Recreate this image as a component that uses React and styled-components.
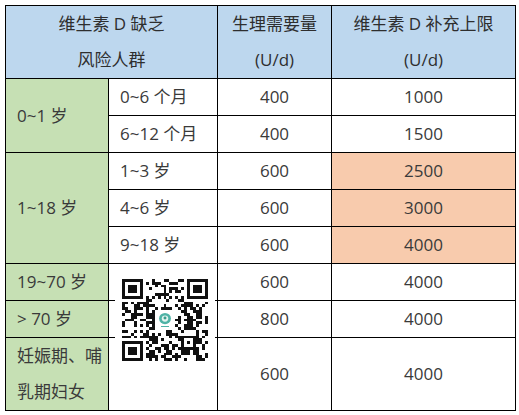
import React from "react";
import styled, { createGlobalStyle } from "styled-components";

const GlobalStyle = createGlobalStyle`
  html, body {
    margin: 0;
    background: #ffffff;
  }
`;

const Page = styled.div`
  padding: 5px;
`;

const Wrap = styled.div`
  position: relative;
  width: 510px;
`;

const Table = styled.table`
  border-collapse: collapse;
  table-layout: fixed;
  width: 510px;
  font-family: "Open Sans", "Noto Sans CJK SC", sans-serif;
  font-size: 17px;
  font-weight: 400;
  color: #3a3a3a;
`;

const Row = styled.tr`
  height: ${(p) => p.$h || 37}px;
`;

const Head = styled.th`
  border: 1px solid #000000;
  background: #bdd7ee;
  font-weight: 400;
  color: #2e2e2e;
  line-height: 36px;
  padding: 0;
  text-align: center;
`;

const Cell = styled.td`
  border: 1px solid #000000;
  background: ${(p) => p.$bg || "#ffffff"};
  padding: ${(p) => (p.$left ? "0 0 0 11px" : "0")};
  text-align: ${(p) => (p.$left ? "left" : "center")};
  line-height: ${(p) => p.$lh || 24}px;
  white-space: nowrap;
`;

const QrBox = styled.div`
  position: absolute;
  left: 110px;
  top: 265px;
  width: 100px;
  height: 100px;
  background: #ffffff;
  display: flex;
  align-items: center;
  justify-content: center;
`;

const GREEN = "#c6e0b4";
const ORANGE = "#f8cbad";

function makeQr() {
  const n = 29;
  const m = [];
  let seed = 20240;
  const rnd = () => {
    seed = (seed * 1103515245 + 12345) % 2147483648;
    return seed / 2147483648;
  };
  for (let y = 0; y < n; y++) {
    m.push([]);
    for (let x = 0; x < n; x++) m[y].push(rnd() > 0.48);
  }
  const finder = (ox, oy) => {
    for (let y = -1; y < 8; y++)
      for (let x = -1; x < 8; x++) {
        const X = ox + x;
        const Y = oy + y;
        if (X < 0 || Y < 0 || X >= n || Y >= n) continue;
        const ring = x === 0 || x === 6 || y === 0 || y === 6;
        const core = x >= 2 && x <= 4 && y >= 2 && y <= 4;
        m[Y][X] = x >= 0 && x <= 6 && y >= 0 && y <= 6 && (ring || core);
      }
  };
  finder(0, 0);
  finder(n - 7, 0);
  finder(0, n - 7);
  for (let i = 8; i < n - 8; i++) {
    m[6][i] = i % 2 === 0;
    m[i][6] = i % 2 === 0;
  }
  for (let y = -2; y <= 2; y++)
    for (let x = -2; x <= 2; x++) {
      const edge = Math.max(Math.abs(x), Math.abs(y));
      m[22 + y][22 + x] = edge !== 1;
    }
  for (let y = 11; y < 18; y++) for (let x = 11; x < 18; x++) m[y][x] = false;
  let d = "";
  for (let y = 0; y < n; y++)
    for (let x = 0; x < n; x++) if (m[y][x]) d += `M${x} ${y}h1v1h-1z`;
  return d;
}

const qrPath = makeQr();

function QrCode() {
  return (
    <svg width="86" height="82" viewBox="0 0 29 29" preserveAspectRatio="none" shapeRendering="crispEdges">
      <path d={qrPath} fill="#111111" />
      <rect x="11.2" y="11.2" width="6.6" height="6.6" fill="#ffffff" />
      <circle cx="14.5" cy="14" r="2" fill="#4fb3a6" shapeRendering="auto" />
      <circle cx="14.5" cy="14" r="1.1" fill="#e3f4ef" shapeRendering="auto" />
      <circle cx="14.5" cy="13.8" r="0.5" fill="#3a9c8c" shapeRendering="auto" />
      <rect x="13" y="16.5" width="3" height="0.45" fill="#4fb3a6" />
    </svg>
  );
}

export default function App() {
  return (
    <Page>
      <GlobalStyle />
      <Wrap>
        <Table>
          <colgroup>
            <col style={{ width: 103 }} />
            <col style={{ width: 109 }} />
            <col style={{ width: 114 }} />
            <col style={{ width: 184 }} />
          </colgroup>
          <thead>
            <Row $h={72}>
              <Head colSpan={2}>
                维生素 D 缺乏
                <br />
                风险人群
              </Head>
              <Head>
                生理需要量
                <br />
                (U/d)
              </Head>
              <Head>
                维生素 D 补充上限
                <br />
                (U/d)
              </Head>
            </Row>
          </thead>
          <tbody>
            <Row>
              <Cell $left $bg={GREEN} rowSpan={2}>0~1 岁</Cell>
              <Cell $left>0~6 个月</Cell>
              <Cell>400</Cell>
              <Cell>1000</Cell>
            </Row>
            <Row>
              <Cell $left>6~12 个月</Cell>
              <Cell>400</Cell>
              <Cell>1500</Cell>
            </Row>
            <Row>
              <Cell $left $bg={GREEN} rowSpan={3}>1~18 岁</Cell>
              <Cell $left>1~3 岁</Cell>
              <Cell>600</Cell>
              <Cell $bg={ORANGE}>2500</Cell>
            </Row>
            <Row>
              <Cell $left>4~6 岁</Cell>
              <Cell>600</Cell>
              <Cell $bg={ORANGE}>3000</Cell>
            </Row>
            <Row>
              <Cell $left>9~18 岁</Cell>
              <Cell>600</Cell>
              <Cell $bg={ORANGE}>4000</Cell>
            </Row>
            <Row>
              <Cell $left $bg={GREEN}>19~70 岁</Cell>
              <Cell />
              <Cell>600</Cell>
              <Cell>4000</Cell>
            </Row>
            <Row>
              <Cell $left $bg={GREEN}>&gt; 70 岁</Cell>
              <Cell />
              <Cell>800</Cell>
              <Cell>4000</Cell>
            </Row>
            <Row $h={72}>
              <Cell $left $bg={GREEN} $lh={36}>
                妊娠期、哺
                <br />
                乳期妇女
              </Cell>
              <Cell />
              <Cell>600</Cell>
              <Cell>4000</Cell>
            </Row>
          </tbody>
        </Table>
        <QrBox>
          <QrCode />
        </QrBox>
      </Wrap>
    </Page>
  );
}
